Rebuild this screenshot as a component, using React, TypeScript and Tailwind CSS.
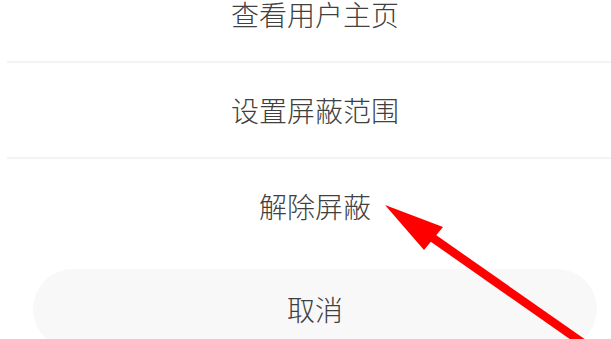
import React from "react";

const rows = ["查看用户主页", "设置屏蔽范围", "解除屏蔽"];

export default function App() {
  return (
    <div
      className="relative w-[611px] h-[339px] overflow-hidden bg-white"
      style={{ fontFamily: '"Noto Sans CJK SC", "Noto Sans", sans-serif' }}
    >
      <div className="w-[630px] mt-[-33px] flex flex-col">
        {rows.map((r, i) => (
          <React.Fragment key={r}>
            <div className="h-[94px] flex items-center justify-center text-[28px] font-light text-[#404040] leading-none">
              {r}
            </div>
            {i < rows.length - 1 && <div className="h-[2px] ml-[7px] bg-[#f3f3f3]" />}
          </React.Fragment>
        ))}
        <div className="px-[33px] mt-[16px]">
          <div className="h-[80px] rounded-[40px] bg-[#f8f8f8] flex items-center justify-center text-[28px] font-light text-[#404040] leading-none">
            取消
          </div>
        </div>
      </div>
      <svg
        className="absolute inset-0 pointer-events-none"
        width="611"
        height="339"
        viewBox="0 0 611 339"
      >
        <line x1="430" y1="236" x2="640" y2="383" stroke="#ff0000" strokeWidth="8.5" />
        <polygon points="385,205 443,227 424,250" fill="#ff0000" />
      </svg>
    </div>
  );
}
